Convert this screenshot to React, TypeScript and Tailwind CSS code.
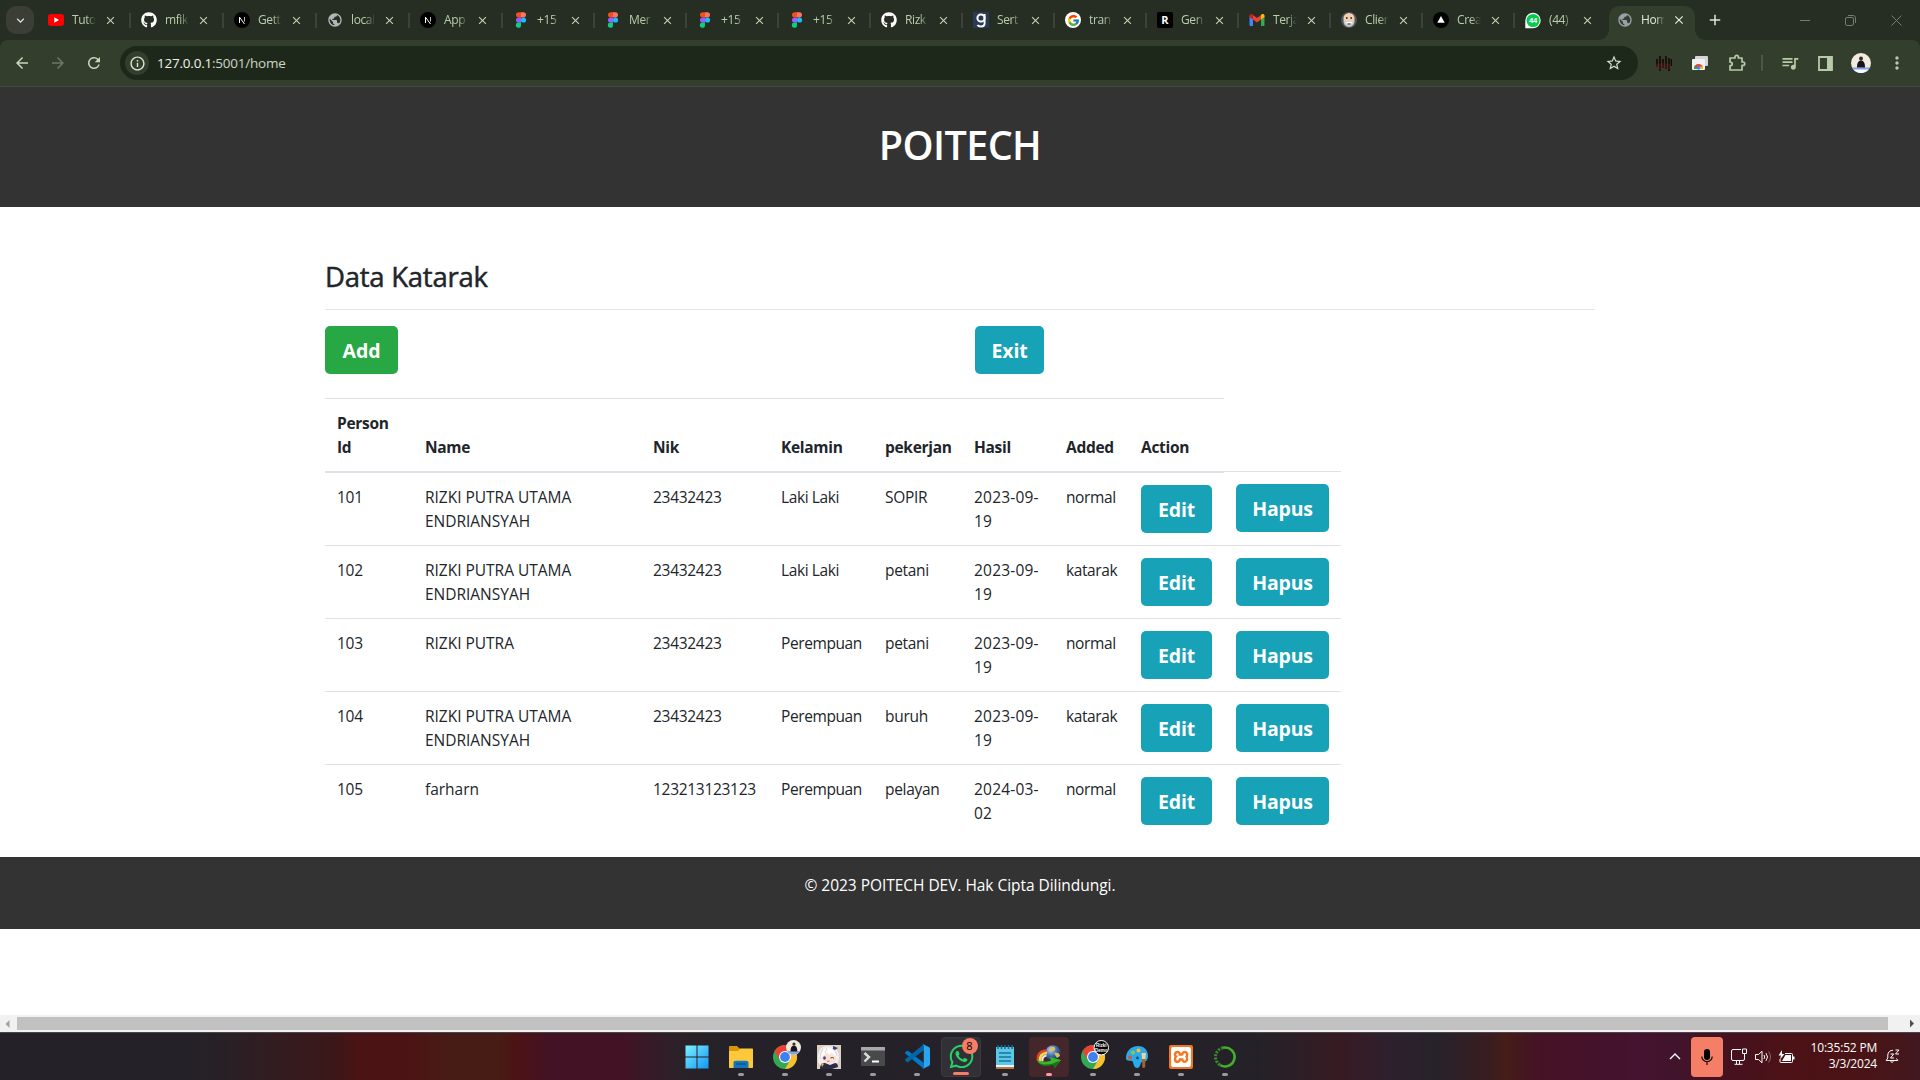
import React from "react";
import { FaGithub, FaWhatsapp } from "react-icons/fa";
import { FcGoogle } from "react-icons/fc";
import { SiXampp } from "react-icons/si";
import {
  MdArrowBack,
  MdArrowForward,
  MdRefresh,
  MdInfoOutline,
  MdStarBorder,
  MdQueueMusic,
  MdMoreVert,
  MdExpandMore,
  MdPublic,
  MdClose,
  MdAdd,
} from "react-icons/md";

/* ---------- favicons ---------- */

const YouTube = () => (
  <svg width="16" height="16" viewBox="0 0 16 16">
    <rect x="0" y="2" width="16" height="12" rx="3" fill="#f00" />
    <path d="M6.3 5.3v5.4L11 8z" fill="#fff" />
  </svg>
);

const GitHub = () => <FaGithub size={16} color="#fff" />;

const NextJs = () => (
  <svg width="16" height="16" viewBox="0 0 16 16">
    <circle cx="8" cy="8" r="8" fill="#000" />
    <path d="M5.5 11V5.2l5 6.8" fill="none" stroke="#fff" strokeWidth="1" />
    <path d="M10.5 5v4.5" stroke="#bbb" strokeWidth="1" />
  </svg>
);

const Globe = () => <MdPublic size={16} color="#b3b6b8" />;
const GlobeActive = () => <MdPublic size={16} color="#9aa0aa" />;

const Figma = () => (
  <svg width="16" height="16" viewBox="0 0 16 16">
    <path d="M8 0.2H5.6a2.6 2.6 0 0 0 0 5.2H8z" fill="#f24e1e" />
    <path d="M8 .2h2.4a2.6 2.6 0 0 1 0 5.2H8z" fill="#ff7262" />
    <path d="M8 5.4H5.6a2.6 2.6 0 0 0 0 5.2H8z" fill="#a259ff" />
    <circle cx="10.5" cy="8" r="2.6" fill="#1abcfe" />
    <path d="M5.6 10.6H8v2.6a2.6 2.6 0 1 1-2.4-2.6z" fill="#0acf83" />
  </svg>
);

const LetterG = () => (
  <svg width="16" height="16" viewBox="0 0 16 16">
    <path d="M0 0h16v16H0z" fill="#2a3a56" />
    <circle cx="8" cy="6" r="3.600" fill="none" stroke="#fff" strokeWidth="2" />
    <path d="M11.600 2v9.500q0 3-3.600 3-2.500 0-3.600-1.500" fill="none" stroke="#fff" strokeWidth="1.900" />
  </svg>
);

const Tile = ({ label, className }: { label: string; className: string }) => (
  <span className={"flex size-4 items-center justify-center " + className}>{label}</span>
);

const GoogleG = () => (
  <span className="flex size-4 items-center justify-center rounded-full bg-white">
    <FcGoogle size={13} />
  </span>
);

const Gmail = () => (
  <svg width="16" height="16" viewBox="0 0 16 16">
    <path d="M.5 4v9.200c0 .4.4.8.9.8H4V6.500z" fill="#4285f4" />
    <path d="M12 14h2.600c.5 0 .9-.4.9-.8V4L12 6.500z" fill="#34a853" />
    <path d="M12 3v4.500l3.500-2.600V3.600C15.500 2 13.700 1.400 12.600 2.300z" fill="#fbbc04" />
    <path d="M4 7.500V3l4 3 4-3v4.500l-4 3z" fill="#ea4335" />
    <path d="M.5 3.600v1.300L4 7.500V3l-.6-.7C2.300 1.400.5 2 .5 3.600z" fill="#c5221f" />
  </svg>
);

const Bearded = () => (
  <svg width="16" height="16" viewBox="0 0 16 16">
    <circle cx="8" cy="8" r="8" fill="#50535f" />
    <ellipse cx="8" cy="6.500" rx="5.600" ry="5.500" fill="#f4cfae" />
    <path d="M2.500 8c1.500 2 3 1.500 5.500 1.500S12 10 13.500 8c.4 4-2 7-5.500 7S2.100 12 2.500 8z" fill="#c9c9cc" />
    <circle cx="5.800" cy="6" r=".9" fill="#333" />
    <circle cx="10.200" cy="6" r=".9" fill="#333" />
    <path d="M4 11q2-2 4-1 2-1 4 1-2 .8-4 0-2 .8-4 0z" fill="#fff" />
    <path d="M6.500 12h3" stroke="#444" />
  </svg>
);

const Vercel = () => (
  <svg width="16" height="16" viewBox="0 0 16 16">
    <circle cx="8" cy="8" r="8" fill="#000" />
    <path d="M8 4l3.700 6.800H4.300z" fill="#fff" />
  </svg>
);

const WhatsAppCount = () => (
  <svg width="16" height="17" viewBox="0 0 17 17">
    <path d="M.3 16.800V8.500a8.200 8.200 0 1 1 8.200 8.200z" fill="#fff" />
    <circle cx="8.600" cy="8.500" r="7" fill="#09c950" />
    <text x="8.600" y="11.400" textAnchor="middle" fontSize="8" fontWeight="700" fill="#fff" fontFamily="Liberation Sans, sans-serif">
      44
    </text>
  </svg>
);

type Tab = { title: string; icon: React.ReactNode };

const tabs: Tab[] = [
  { title: "Tuto", icon: <YouTube /> },
  { title: "mfik", icon: <GitHub /> },
  { title: "Gett", icon: <NextJs /> },
  { title: "local", icon: <Globe /> },
  { title: "App", icon: <NextJs /> },
  { title: "+15", icon: <Figma /> },
  { title: "Mer", icon: <Figma /> },
  { title: "+15", icon: <Figma /> },
  { title: "+15", icon: <Figma /> },
  { title: "Rizk", icon: <GitHub /> },
  { title: "Sert", icon: <LetterG /> },
  { title: "tran", icon: <GoogleG /> },
  { title: "Gen", icon: <Tile label="R" className="rounded-[2px] bg-black text-[11px] font-bold text-white" /> },
  { title: "Terja", icon: <Gmail /> },
  { title: "Clien", icon: <Bearded /> },
  { title: "Crea", icon: <Vercel /> },
  { title: "(44)", icon: <WhatsAppCount /> },
];

const TabTitle = ({ text, className }: { text: string; className: string }) => (
  <span
    className={
      "ml-2 w-[24px] overflow-hidden whitespace-nowrap text-[12px] leading-4 tracking-[-0.4px] [mask-image:linear-gradient(to_right,#000_60%,transparent)] " +
      className
    }
  >
    {text}
  </span>
);

const TabStrip = () => (
  <div className="flex h-10 bg-[#262d22]">
    <div className="flex w-[38px] shrink-0 items-start pt-[6px] pl-[6px]">
      <div className="flex h-[28px] w-[28px] items-center justify-center rounded-[10px] bg-[#3b3d37]">
        <MdExpandMore size={15} color="#dfe6da" />
      </div>
    </div>
    {tabs.map((t, i) => (
      <div key={i} className={"flex h-10 shrink-0 items-center " + (i < 5 ? "w-[93px]" : "w-[92px]")}>
        <div className="flex h-4 w-full items-center pl-[10px]">
          {t.icon}
          <TabTitle text={t.title} className="text-[#b9ceab]" />
          <MdClose size={13} color="#c3d6b6" className="ml-[8px]" />
          <span className={i === 16 ? "hidden" : "ml-auto h-[15px] w-[2px] bg-[#3c4238]"} />
        </div>
      </div>
    ))}
    <div className="relative -ml-[8px] flex h-10 w-[106px] shrink-0 items-end">
      <div className="h-[10px] w-[10px] bg-[radial-gradient(circle_at_0_0,transparent_9.5px,#333e2d_10px)]" />
      <div className="flex h-[34px] w-[86px] items-center rounded-t-[10px] bg-[#333e2d] pb-[6px] pl-[8px]">
        <GlobeActive />
        <TabTitle text="Hom" className="text-[#e0ead8]" />
        <MdClose size={14} color="#e6f0de" className="ml-[7px]" />
      </div>
      <div className="h-[10px] w-[10px] bg-[radial-gradient(circle_at_100%_0,transparent_9.5px,#333e2d_10px)]" />
    </div>
    <div className="flex h-10 w-[40px] shrink-0 items-center pl-[1px]">
      <MdAdd size={18} color="#dfe8d8" />
    </div>
    <div className="ml-auto flex h-10 w-[138px] shrink-0 items-center justify-around text-[#757b70]">
      <svg width="10" height="10" viewBox="0 0 10 10">
        <path d="M0 5.500h10" stroke="currentColor" />
      </svg>
      <svg width="11" height="11" viewBox="0 0 11 11" fill="none" stroke="currentColor">
        <rect x=".5" y="2.500" width="8" height="8" rx="1.500" />
        <path d="M3 .5h5a2.500 2.500 0 0 1 2.500 2.500v5" />
      </svg>
      <svg width="11" height="11" viewBox="0 0 11 11">
        <path d="M.5.5l10 10M10.500.5l-10 10" stroke="currentColor" />
      </svg>
    </div>
  </div>
);

const Toolbar = () => (
  <div className="bg-[#262d22]">
    <div className="flex h-[47px] items-center rounded-t-[8px] border-b border-[#454a40] bg-[#333e2d] pl-[13px]">
      <MdArrowBack size={18} color="#c5d8b8" />
      <MdArrowForward size={18} color="#6d7967" className="ml-[18px]" />
      <MdRefresh size={18} color="#c5d8b8" className="ml-[18px]" />
      <div className="ml-[17px] flex h-[34px] w-[1518px] items-center rounded-full bg-[#1e281a] pr-[15px] pl-[5px]">
        <span className="flex size-6 items-center justify-center rounded-full bg-[#333e2d]">
          <MdInfoOutline size={17} color="#dbe6d3" />
        </span>
        <span className="ml-[8px] text-[13.5px] tracking-[-0.22px] text-[#ccd6c6]">
          <span className="text-[#eef3ea]">127.0.0.1</span>:5001/home
        </span>
        <MdStarBorder size={18} color="#d3dfca" className="ml-auto" />
      </div>
      <div className="flex items-center">
        <svg width="16" height="18" viewBox="0 0 16 18" className="ml-[18px]">
          <path d="M1 5v6M4 2v15M7 5v9M10 2v13M13 4v13M15.500 5v7" stroke="#150505" strokeWidth="1.600" />
          <path d="M1 10v3M4 10v6M7 9v5M10 10v5M13 10v5" stroke="#4d0f0d" strokeWidth="1.600" />
        </svg>
        <svg width="16" height="14" viewBox="0 0 16 14" className="ml-[20px]">
          <rect x="3" y="0" width="13" height="10" rx="1" fill="#d5d5d8" />
          <rect x="0" y="3" width="13" height="11" rx="1" fill="#f1f1f4" />
          <path d="M2 12.500a4.500 4.500 0 0 1 9 0z" fill="#e34234" />
          <path d="M7.500 10.500h3l.5 2.500H8z" fill="#fbc116" />
          <path d="M2.200 10.500l2 0 1.300 2.500H2z" fill="#2ba24c" />
          <circle cx="6.500" cy="12" r="1.800" fill="#4285f4" />
        </svg>
        <svg width="18" height="18" viewBox="0 0 18 18" className="ml-[20px]">
          <path
            d="M2 4h5V3a1.700 1.700 0 0 1 3.400 0v1H14v4h1a1.700 1.700 0 0 1 0 3.400h-1V16H2v-4.300c3 0 3-3.600 0-3.600z"
            fill="none"
            stroke="#b6cba8"
            strokeWidth="1.700"
            strokeLinejoin="round"
          />
        </svg>
        <span className="ml-[15px] h-[16px] w-[2px] bg-[#4a5743]" />
        <MdQueueMusic size={20} color="#b6cba8" className="ml-[17px]" />
        <svg width="15" height="15" viewBox="0 0 15 15" className="ml-[18px]">
          <path d="M1 1h13v13H1z" fill="none" stroke="#b6cba8" strokeWidth="1.800" />
          <path d="M9 1h5v13H9z" fill="#b6cba8" />
        </svg>
        <svg width="20" height="20" viewBox="0 0 20 20" className="ml-[18px]">
          <circle cx="10" cy="10" r="10" fill="#f1ecdf" />
          <path d="M1 14.500h18a10 10 0 0 1-18 0z" fill="#7fa4e6" />
          <path d="M2.500 16.500h15a10 10 0 0 1-15 0z" fill="#fff" />
          <circle cx="10" cy="5.500" r="2" fill="#3b2c28" />
          <path d="M6 14.500c0-5 1.500-7 4-7s4 2 4 7z" fill="#15161b" />
        </svg>
        <MdMoreVert size={20} color="#b6cba8" className="ml-[16px]" />
      </div>
    </div>
  </div>
);

/* ---------- page ---------- */

const Btn = ({ children, className }: { children: string; className: string }) => (
  <button
    className={
      "flex h-12 items-center justify-center rounded-[5px] pt-[2px] text-[19.5px] font-bold text-white " + className
    }
  >
    {children}
  </button>
);

const rows = [
  ["101", "RIZKI PUTRA UTAMA ENDRIANSYAH", "23432423", "Laki Laki", "SOPIR", "2023-09-19", "normal"],
  ["102", "RIZKI PUTRA UTAMA ENDRIANSYAH", "23432423", "Laki Laki", "petani", "2023-09-19", "katarak"],
  ["103", "RIZKI PUTRA", "23432423", "Perempuan", "petani", "2023-09-19", "normal"],
  ["104", "RIZKI PUTRA UTAMA ENDRIANSYAH", "23432423", "Perempuan", "buruh", "2023-09-19", "katarak"],
  ["105", "farharn", "123213123123", "Perempuan", "pelayan", "2024-03-02", "normal"],
];

const cellStyles = [
  "pl-3",
  "w-[190px] pl-3 tracking-[-0.02px]",
  "pl-3",
  "pl-3 tracking-[-0.4px] whitespace-nowrap",
  "pl-3",
  "w-[85px] pl-3 tracking-[0.2px]",
  "pl-3 tracking-[-0.4px]",
];

const Page = () => (
  <div className="flex h-[945px] flex-col bg-white text-[#212529]">
    <header className="flex h-[120px] shrink-0 items-center justify-center bg-[#333] pb-[2px]">
      <h1 className="text-[39.5px] font-semibold tracking-[-0.6px] text-white">POITECH</h1>
    </header>
    <main className="shrink-0 px-[325px] pb-5">
      <h2 className="flex h-[103px] items-end border-b border-[#e5e5e5] pb-[15px] text-[27.5px] leading-[34px] font-medium tracking-[-0.25px] [-webkit-text-stroke:0.5px_#212529]">
        Data Katarak
      </h2>
      <div className="flex pt-4">
        <Btn className="w-[73px] bg-[#28a745]">Add</Btn>
        <Btn className="ml-[577px] w-[69px] bg-[#17a2b8] tracking-[-0.2px]">Exit</Btn>
      </div>
      <div className="mt-6 text-[15.5px] leading-6 tracking-[-0.3px]">
        <div className="grid h-[75px] w-[899px] grid-cols-[88px_228px_128px_104px_89px_92px_75px_95px] items-end border-t border-b-2 border-[#dee2e6] pb-3 font-bold">
          {["Person Id", "Name", "Nik", "Kelamin", "pekerjan", "Hasil", "Added", "Action"].map((h) => (
            <div key={h} className={h === "Person Id" ? "w-[80px] pl-3" : "pl-3"}>
              {h}
            </div>
          ))}
        </div>
        {rows.map((r, i) => (
          <div
            key={r[0]}
            className={
              "grid w-[1016px] grid-cols-[88px_228px_128px_104px_89px_92px_75px_95px_117px] " +
              (i === 0 ? "h-[72px] pt-3" : "h-[73px] border-t border-[#dee2e6] pt-3")
            }
          >
            {r.map((c, j) => (
              <div key={j} className={cellStyles[j]}>
                {c}
              </div>
            ))}
            <div className="pl-3">
              <Btn className="w-[71px] bg-[#17a2b8] tracking-[-0.2px]">Edit</Btn>
            </div>
            <div className={i === 0 ? "-mt-[14px] border-t border-[#dee2e6] pt-3 pl-3" : "pl-3"}>
              <Btn className="w-[93px] bg-[#17a2b8] tracking-[-0.2px]">Hapus</Btn>
            </div>
          </div>
        ))}
      </div>
    </main>
    <footer className="h-[72px] shrink-0 bg-[#333] pt-4 text-center text-[15.5px] leading-6 tracking-[-0.04px] text-white">
      © 2023 POITECH DEV. Hak Cipta Dilindungi.
    </footer>
    <div className="mt-auto flex h-[17px] shrink-0 items-center justify-between bg-[#f1f1f1]">
      <svg width="17" height="17" viewBox="0 0 17 17">
        <path d="M9.500 5v8L5.500 9z" fill="#a3a3a3" />
      </svg>
      <div className="h-[13px] w-[1871px] bg-[#c1c1c1]" />
      <svg width="32" height="17" viewBox="0 0 32 17">
        <path d="M22 4.500v8l4-4z" fill="#505050" />
      </svg>
    </div>
  </div>
);

/* ---------- taskbar ---------- */

const Start = () => (
  <svg width="24" height="24" viewBox="0 0 24 24">
    <defs>
      <linearGradient id="win" x1="0" y1="0" x2="1" y2="1">
        <stop offset="0" stopColor="#7df1ff" />
        <stop offset="1" stopColor="#1296f5" />
      </linearGradient>
    </defs>
    <path d="M.5.5h11v11H.5zM12.500.5h11v11h-11zM.5 12.500h11v11H.5zM12.500 12.500h11v11h-11z" fill="url(#win)" />
  </svg>
);

const Explorer = () => (
  <svg width="24" height="24" viewBox="0 0 24 24">
    <path d="M0 2c0-.6.400-1 1-1h7l2.500 2.500V8H0z" fill="#d9960a" />
    <path d="M0 6h9l2-2.500h12c.6 0 1 .4 1 1V22c0 .6-.4 1-1 1H1c-.6 0-1-.4-1-1z" fill="#fdc93b" />
    <path d="M4.500 23v-5c0-1.500.8-2.300 2.300-2.300h10.400c1.500 0 2.300.8 2.300 2.300v5z" fill="#1576c0" />
    <path d="M7 19h10" stroke="#0a4f8c" strokeWidth="1.200" />
  </svg>
);

const Chrome = ({ children }: { children: React.ReactNode }) => (
  <svg width="30" height="30" viewBox="0 0 30 30">
    <circle cx="14" cy="17" r="12" fill="#34a853" />
    <path d="M14 11h10.400A12 12 0 0 1 14 29l5.200-9z" fill="#fbc02d" />
    <path d="M3.600 11A12 12 0 0 1 24.400 11H14L8.800 20z" fill="#ea4335" />
    <circle cx="14" cy="17" r="6" fill="#fff" />
    <circle cx="14" cy="17" r="4.900" fill="#3d82f0" />
    {children}
  </svg>
);

const ChromeAvatar = () => (
  <Chrome>
    <circle cx="22.500" cy="7.500" r="7.500" fill="#f0eadd" />
    <path d="M16 11h13a7.500 7.500 0 0 1-13 0z" fill="#87a9df" />
    <circle cx="23" cy="4" r="1.600" fill="#3b2c28" />
    <path d="M19.500 11.500c0-4 1-6 3.400-6s3.400 2 3.400 6z" fill="#15161b" />
  </Chrome>
);

const ChromeLabel = () => (
  <Chrome>
    <circle cx="22.300" cy="7.700" r="7.200" fill="#000" stroke="#fff" strokeWidth="1" />
    <text x="22.300" y="7.200" fontSize="4.500" fontWeight="700" fill="#fff" textAnchor="middle" fontFamily="Liberation Sans, sans-serif">
      Rizki
    </text>
    <text x="22.300" y="11.700" fontSize="4.500" fontWeight="700" fill="#fff" textAnchor="middle" fontFamily="Liberation Sans, sans-serif">
      Demo
    </text>
  </Chrome>
);

const Paimon = () => (
  <svg width="24" height="24" viewBox="0 0 24 24">
    <path d="M0 0h24v24H0z" fill="#dccfc4" />
    <path d="M1 17C0 5 4 1 11 1s12 4 11 13l-2 5-5 2H4z" fill="#f3edef" />
    <path d="M4 11l8-3 8 4-2 5-6 2-6-2z" fill="#fbe0d2" />
    <path d="M2 15C2 7 6 3 11 3s8 3 10 10l-4-3-2-3-3 3-2-3-4 4z" fill="#fffdfc" />
    <path d="M6 4Q3 8 3 14M15 3q4 3 5 8M10 3L8 8" stroke="#c9c0cc" strokeWidth=".7" fill="none" />
    <ellipse cx="7.500" cy="13" rx="1.400" ry="1.800" fill="#3c4a85" />
    <path d="M13.500 13q2-1.200 3.500.3" stroke="#4b3b48" fill="none" />
    <path d="M10 16.200h2.500" stroke="#c66a64" />
    <path d="M3 24c0-4 2-6 5-6l5 2 5-2c2 0 3 2 3 4l-6 2z" fill="#2c2b46" />
    <path d="M4 18l3 1-2 3z" fill="#d8b04a" />
    <path d="M16 1l5 2-3 2-2-1z" fill="#3a4272" />
  </svg>
);

const Terminal = () => (
  <svg width="24" height="19" viewBox="0 0 24 19">
    <rect width="24" height="19" rx="1" fill="#48494b" />
    <path d="M0 1c0-.6.400-1 1-1h22c.6 0 1 .4 1 1v2.500H0z" fill="#a8a9ab" />
    <path d="M3.500 6l4.500 4-4.500 4.500" fill="none" stroke="#dcdcdc" strokeWidth="2.400" />
    <path d="M11 14.500h7" stroke="#fff" strokeWidth="2" />
  </svg>
);

const VSCode = () => (
  <svg width="25" height="25" viewBox="0 0 100 100">
    <path d="M1 33l6-5q3-2 6 0l62 47v24L1 38q-3-3 0-5z" fill="#0179cb" />
    <path d="M1 66l6 6q3 2 6 0l62-47V1L1 61q-3 3 0 5z" fill="#0065a9" />
    <path d="M71 99c-2 0-4-1-5-2 3 3 9 1 9-4V7c0-5-6-7-9-4 2-2 6-3 9-1l20 10q5 2 5 8v60q0 6-5 8L75 98q-2 1-4 1z" fill="#2aa4ee" />
  </svg>
);

const Notepad = () => (
  <svg width="20" height="26" viewBox="0 0 20 26">
    <path d="M1 3h18v20H1z" fill="#5cc8e6" />
    <path d="M1 21h18v2.500H1z" fill="#f2f2f2" />
    <path d="M1 23.500h18V25H1z" fill="#c4702a" />
    <path d="M3 1v4M6.500 1v4M10 1v4M13.500 1v4M17 1v4" stroke="#156c93" strokeWidth="1.500" />
    <path d="M4 9h12M4 13h12M4 17h12" stroke="#17749c" strokeWidth="1.500" />
  </svg>
);

const Idm = () => (
  <svg width="26" height="24" viewBox="0 0 26 24">
    <defs>
      <radialGradient id="idm" cx=".35" cy=".3" r=".75">
        <stop offset="0" stopColor="#c3d6f2" />
        <stop offset=".45" stopColor="#4c78b8" />
        <stop offset="1" stopColor="#142b55" />
      </radialGradient>
    </defs>
    <circle cx="17" cy="8" r="7.800" fill="url(#idm)" />
    <path d="M14 2.500c3-1.500 6-.5 5 2s-5 3.500-5-2zM18 8c3-1 6 0 6 3l-3 2z" fill="#d9c05a" />
    <path d="M2.200 16C.5 9 5 5.500 11 5.500" fill="none" stroke="#e3422a" strokeWidth="2.500" />
    <path d="M4 16.500C3.500 11 6 8.200 11 7.800" fill="none" stroke="#f4dc4a" strokeWidth="2.800" />
    <path d="M6.500 16.500C6 13 7.500 11 10.500 10.500" fill="none" stroke="#e9e9e9" strokeWidth="2" />
    <path d="M1 14c2.500 3 8 3.500 14 1.500l-1-3.500 11 3-6.500 8-1-3.500C9 22 2 20.500 1 14z" fill="#37b82b" />
    <path d="M2 17.500c4 2.500 10 2.500 15 1l7-3-5.500 7.500-1-3.500C10 22 5 21 2 17.500z" fill="#14701a" />
  </svg>
);

const Paint = () => (
  <svg width="24" height="24" viewBox="0 0 24 24">
    <path d="M1 13C1 6 6 1 13 1c6 0 10 4 10 10 0 5-3 6-6 6-2 0-1 6-5 6-4 0-3-6-5-7s-6 1-6-3z" fill="#2ba9ea" />
    <circle cx="5" cy="12.500" r="2" fill="#e0532f" />
    <circle cx="8" cy="7.500" r="2" fill="#8fc73e" />
    <circle cx="13.500" cy="5.500" r="2" fill="#f8bf2a" />
    <circle cx="12.500" cy="13" r="1.400" fill="#12527d" />
    <path d="M16.500 8h4.500l-.6 6h-3.300z" fill="#f2cf95" />
    <path d="M17.200 14h3v8q-1.500 2-3 0z" fill="#a5622a" />
  </svg>
);

const Xampp = () => (
  <span className="flex size-6 items-center justify-center rounded-[2px] bg-[#f37623]">
    <SiXampp size={20} color="#fff" />
  </span>
);

const Anaconda = () => (
  <svg width="24" height="24" viewBox="0 0 24 24" fill="none">
    <path d="M10 2.700A9.500 9.500 0 1 1 7 20" stroke="#43b02a" strokeWidth="2.600" />
    <path d="M10 2.700A9.500 9.500 0 0 0 7 20" stroke="#3a8f2a" strokeWidth="3" strokeDasharray="2 1.300" />
  </svg>
);

const apps: { icon: React.ReactNode; box?: string; dot: string }[] = [
  { icon: <Start />, dot: "hidden" },
  { icon: <Explorer />, dot: "w-[6px] bg-[#9c999f]" },
  { icon: <ChromeAvatar />, box: "pl-[2px] pb-[4px]", dot: "w-[6px] bg-[#9c999f]" },
  { icon: <Paimon />, dot: "w-[6px] bg-[#9c999f]" },
  { icon: <Terminal />, dot: "w-[6px] bg-[#9c999f]" },
  { icon: <VSCode />, dot: "w-[6px] bg-[#9c999f]" },
  {
    icon: (
      <span className="relative">
        <FaWhatsapp size={27} color="#25d366" />
        <span className="absolute -top-[5px] left-[14px] flex size-4 items-center justify-center rounded-full bg-[#f47f66] text-[11px] text-black">
          8
        </span>
      </span>
    ),
    box: "bg-[#313036] border border-[#3b3a40]",
    dot: "w-[16px] bg-[#f47f66]",
  },
  { icon: <Notepad />, dot: "w-[6px] bg-[#9c999f]" },
  { icon: <Idm />, box: "bg-[#45262a]", dot: "w-[6px] bg-[#ff9aa5]" },
  { icon: <ChromeLabel />, box: "pl-[2px] pb-[4px]", dot: "w-[6px] bg-[#9c999f]" },
  { icon: <Paint />, dot: "w-[6px] bg-[#9c999f]" },
  { icon: <Xampp />, dot: "w-[6px] bg-[#9c999f]" },
  { icon: <Anaconda />, dot: "w-[6px] bg-[#9c999f]" },
];

const Taskbar = () => (
  <div className="flex h-12 items-center border-t border-[#4b474e] bg-[linear-gradient(to_right,#242228_0px,#242228_200px,#331c20_280px,#3c1719_335px,#4c1314_360px,#4c1314_410px,#471c15_450px,#461c15_500px,#4c1314_515px,#441225_550px,#441225_620px,#2c2028_675px,#242228_720px,#242228_1260px,#371a22_1340px,#2e202e_1390px,#26222a_1435px,#3a1d20_1490px,#451d18_1505px,#451225_1540px,#451230_1640px,#40142a_1680px,#451220_1720px,#4c1216_1790px,#4a1315_1860px,#421820_1920px)] pl-[675px]">
    {apps.map((a, i) => (
      <div key={i} className="flex h-[47px] w-11 shrink-0 items-center justify-center">
        <div className={"relative flex h-10 w-10 items-center justify-center rounded-[4px] " + (a.box ?? "")}>
          <span className="flex h-7 items-center justify-center">{a.icon}</span>
          <span className="absolute inset-x-0 bottom-[1px] flex justify-center">
            <span className={"h-[3px] rounded-full " + a.dot} />
          </span>
        </div>
      </div>
    ))}
    <div className="ml-auto flex items-center pr-[20px] text-white">
      <svg width="12" height="7" viewBox="0 0 12 7">
        <path d="M1 6l5-5 5 5" fill="none" stroke="#fff" strokeWidth="1.400" />
      </svg>
      <div className="ml-[10px] flex h-10 w-8 items-center justify-center rounded-[4px] bg-[#f47f66]">
        <svg width="12" height="16" viewBox="0 0 12 16">
          <rect x="3" y="0" width="6" height="11" rx="3" fill="#000" />
          <path d="M.8 7.500a5.200 5.200 0 0 0 10.400 0M6 13v3" fill="none" stroke="#000" strokeWidth="1.100" />
        </svg>
      </div>
      <svg width="17" height="17" viewBox="0 0 17 17" fill="none" stroke="#fff" className="ml-[8px]">
        <path d="M10 1.500H2A1.500 1.500 0 0 0 .5 3v8A1.500 1.500 0 0 0 2 12.500h10a1.500 1.500 0 0 0 1.500-1.500V7.500M5.500 12.500V16M8.500 12.500V16M3.500 16.300h8M11.500 1h4v4.500h-4zM13.500 5.500V8" />
      </svg>
      <svg width="17" height="14" viewBox="0 0 17 14" fill="none" stroke="#fff" className="ml-[7px]">
        <path d="M.5 4.500h3L7 1.200v11.600L3.500 9.500h-3zM9 5q1.400 2 0 4M11 3.200q3 3.800 0 7.600" />
        <path d="M13.500 1.500q4 5.500 0 11" stroke="#8a6a6c" />
      </svg>
      <svg width="17" height="14" viewBox="0 0 17 14" className="ml-[6px]">
        <path d="M7 3.500h6.500q1 0 1 1v7q0 1-1 1H3q-1 0-1-1V9" fill="none" stroke="#fff" />
        <path d="M7.500 5H13v6H4zM15 6.500h1.500v3H15zM4 0L.5 5.500h2.500L2 9.500 6.500 4H4z" fill="#fff" />
      </svg>
      <div className="ml-[14px] w-[68px] pb-[1px] text-right text-[12px] leading-4 tracking-[-0.2px] whitespace-nowrap">
        <div>10:35:52 PM</div>
        <div>3/3/2024</div>
      </div>
      <svg width="15" height="15" viewBox="0 0 15 15" fill="none" stroke="#fff" className="ml-[8px]">
        <path d="M8 1.300A4.800 4.800 0 0 0 2.800 6v3L1.200 11.500h11.600L11.500 9.500M5.300 12q1.700 3 3.400 0" />
        <path d="M5.500 5h3.200L5.500 9h3.500M10.500 1h3.500l-3.500 4H14" />
      </svg>
    </div>
  </div>
);

export default function App() {
  return (
    <div className="flex h-[1080px] w-[1920px] flex-col overflow-hidden font-['Open_Sans','Noto_Sans',sans-serif]">
      <TabStrip />
      <Toolbar />
      <Page />
      <Taskbar />
    </div>
  );
}
